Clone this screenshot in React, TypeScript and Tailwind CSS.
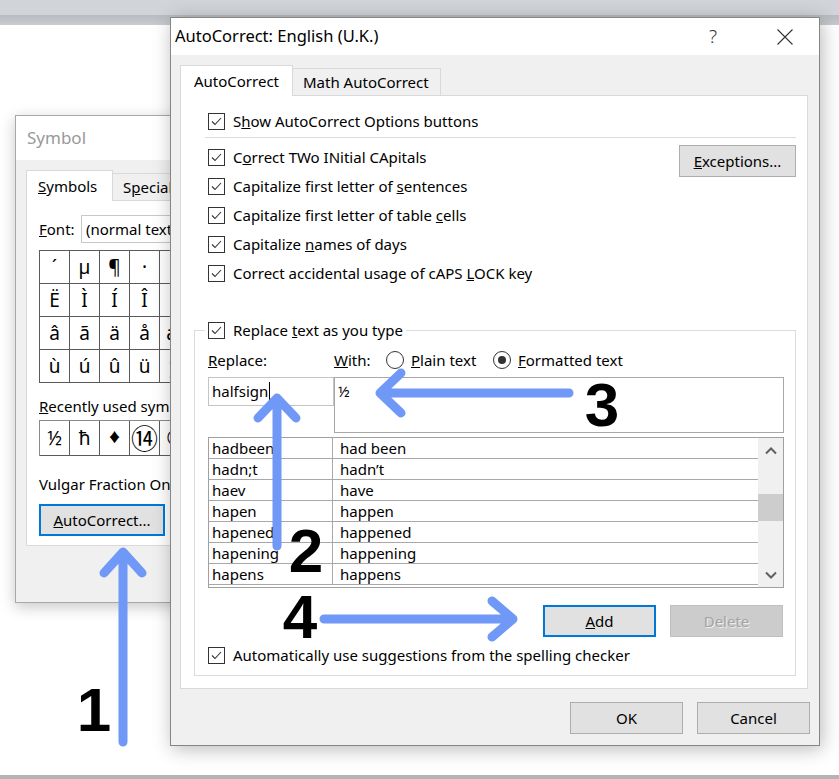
import React from 'react';

const rows: [string, string][] = [
  ['hadbeen', 'had been'],
  ['hadn;t', 'hadn’t'],
  ['haev', 'have'],
  ['hapen', 'happen'],
  ['hapened', 'happened'],
  ['hapening', 'happening'],
  ['hapens', 'happens'],
];

const grid = ['´', 'µ', '¶', '·', '¸', '¹', 'º', '»', 'Ë', 'Ì', 'Í', 'Î', 'Ï', 'Ð', 'Ñ', 'Ò', 'â', 'ã', 'ä', 'å', 'æ', 'ç', 'è', 'é', 'ù', 'ú', 'û', 'ü', 'ý', 'þ', 'ÿ', 'Ā'];
const recent: [string, string][] = [
  ['½', 'text-[19px]'],
  ['ħ', 'text-[19px]'],
  ['♦', 'text-[13px]'],
  ['⑭', 'text-[27px] leading-none'],
  ['©', 'text-[19px]'],
  ['€', 'text-[19px]'],
  ['£', 'text-[19px]'],
  ['¥', 'text-[19px]'],
];

const Check = () => (
  <span className="flex h-[17px] w-[17px] shrink-0 items-center justify-center border border-[#333] bg-white">
    <svg width="13" height="13" viewBox="0 0 13 13">
      <path d="M2 6.5 L5 9.5 L11 3" fill="none" stroke="#333" strokeWidth="1.1" />
    </svg>
  </span>
);

const CheckRow = ({ children }: { children: React.ReactNode }) => (
  <div className="flex h-[29px] items-center gap-[8px]">
    <Check />
    <span>{children}</span>
  </div>
);

const Radio = ({ on }: { on?: boolean }) => (
  <span className="flex h-[18px] w-[18px] shrink-0 items-center justify-center rounded-full border border-[#333] bg-white">
    {on && <span className="h-[8px] w-[8px] rounded-full bg-[#333]" />}
  </span>
);

const Chevron = ({ down }: { down?: boolean }) => (
  <svg width="12" height="8" viewBox="0 0 12 8">
    <path d={down ? 'M1 1.5 L6 6.5 L11 1.5' : 'M1 6.5 L6 1.5 L11 6.5'} fill="none" stroke="#606060" strokeWidth="2" />
  </svg>
);

const SymbolDialog = () => (
  <div className="absolute left-[15px] top-[115px] flex h-[488px] w-[420px] flex-col border border-[#a8a8a8] bg-[#f0f0f0] shadow-[0_4px_14px_rgba(0,0,0,0.22)]">
    <div className="flex h-[44px] items-center bg-white pl-[11px] text-[17px] text-[#999]">Symbol</div>
    <div className="pl-[10px] pt-[10px]">
      <div className="flex h-[30px] items-end">
        <div className="relative z-10 -mb-px flex h-[31px] w-[87px] items-center border border-b-0 border-[#d9d9d9] bg-white pl-[11px]">
          <span><u>S</u>ymbols</span>
        </div>
        <div className="flex h-[27px] w-[170px] items-center border-r border-t border-[#d9d9d9] pl-[10px]">
          S<u>p</u>ecial Characters
        </div>
      </div>
      <div className="h-[346px] border border-[#d9d9d9] bg-white pl-[12px] pt-[14px]">
        <div className="flex h-[28px] items-center">
          <span className="w-[42px]"><u>F</u>ont:</span>
          <div className="flex h-[28px] w-[220px] items-center border border-[#c8c8c8] pl-[4px]">(normal text)</div>
        </div>
        <div className="mt-[7px] grid w-fit grid-cols-[repeat(8,30px)] border-l border-t border-[#5a5a5a]">
          {grid.map((c, i) => (
            <div key={i} className="flex h-[33px] items-center justify-center border-b border-r border-[#5a5a5a] text-[19px]">
              {c}
            </div>
          ))}
        </div>
        <div className="mt-[13px] leading-[20px]"><u>R</u>ecently used symbols:</div>
        <div className="mt-[4px] grid w-fit grid-cols-[repeat(8,30px)] border-l border-t border-[#8a8a8a]">
          {recent.map(([c, size], i) => (
            <div key={i} className={`flex h-[35px] items-center justify-center border-b border-r border-[#5a5a5a] ${size}`}>
              {c}
            </div>
          ))}
        </div>
        <div className="mt-[18px] leading-[20px]">Vulgar Fraction One Half</div>
        <button className="mt-[10px] flex h-[32px] w-[126px] items-center justify-center border-2 border-[#0078d7] bg-[#e1e1e1]">
          <span><u>A</u>utoCorrect...</span>
        </button>
      </div>
    </div>
  </div>
);

const AutoCorrectDialog = () => (
  <div className="absolute left-[170px] top-[17px] flex h-[729px] w-[650px] flex-col border border-[#858585] bg-[#f0f0f0] shadow-[2px_3px_18px_rgba(0,0,0,0.28)]">
    <div className="flex h-[37px] items-center bg-white pl-[4px]">
      <span className="text-[16.5px]">AutoCorrect: English (U.K.)</span>
      <span className="ml-auto mr-[60px] text-[19px] font-light text-[#333]">?</span>
      <svg className="mr-[26px]" width="16" height="16" viewBox="0 0 16 16">
        <path d="M0.5 0.5 L15.5 15.5 M15.5 0.5 L0.5 15.5" stroke="#333" strokeWidth="1.1" />
      </svg>
    </div>
    <div className="flex flex-1 flex-col pl-[9px] pr-[11px] pt-[10px]">
      <div className="flex h-[30px] items-end">
        <div className="relative z-10 -mb-px flex h-[31px] w-[113px] items-center justify-center border border-b-0 border-[#d9d9d9] bg-white">
          AutoCorrect
        </div>
        <div className="flex h-[27px] w-[148px] items-center border-r border-t border-[#d9d9d9] pl-[10px]">
          Math AutoCorrect
        </div>
      </div>
      <div className="flex h-[594px] flex-col border border-[#d9d9d9] bg-white pl-[13px] pr-[11px] pt-[11px]">
        <div className="pl-[14px]">
          <CheckRow>S<u>h</u>ow AutoCorrect Options buttons</CheckRow>
        </div>
        <div className="ml-[11px] mt-px h-px bg-[#dcdcdc]" />
        <div className="mt-[5px] flex pl-[14px]">
          <div className="flex-1">
            <CheckRow>C<u>o</u>rrect TWo INitial CApitals</CheckRow>
            <CheckRow>Capitalize first letter of <u>s</u>entences</CheckRow>
            <CheckRow>Capitalize first letter of table <u>c</u>ells</CheckRow>
            <CheckRow>Capitalize <u>n</u>ames of days</CheckRow>
            <CheckRow>Correct accidental usage of cAPS <u>L</u>OCK key</CheckRow>
          </div>
          <button className="mt-[2px] flex h-[32px] w-[117px] items-center justify-center border border-[#adadad] bg-[#e1e1e1]">
            <span><u>E</u>xceptions...</span>
          </button>
        </div>
        <div className="mt-[42px] flex h-[346px] flex-col border border-[#dcdcdc] pl-[13px] pr-[11px]">
          <div className="-ml-[3px] -mt-[11px] flex h-[20px] w-fit items-center gap-[8px] bg-white pl-[3px] pr-[3px]">
            <Check />
            <span>Replace <u>t</u>ext as you type</span>
          </div>
          <div className="mt-[8px] flex h-[24px] items-center">
            <span className="w-[126px]"><u>R</u>eplace:</span>
            <span className="w-[52px]"><u>W</u>ith:</span>
            <span className="flex w-[107px] items-center gap-[7px]">
              <Radio />
              <span><u>P</u>lain text</span>
            </span>
            <span className="flex items-center gap-[7px]">
              <Radio on />
              <span><u>F</u>ormatted text</span>
            </span>
          </div>
          <div className="mt-[5px] flex items-start">
            <div className="flex h-[29px] w-[126px] items-center border border-[#c4c4c4] pl-[3px]">
              halfsign<span className="ml-px h-[19px] w-px bg-black" />
            </div>
            <div className="h-[56px] flex-1 border border-[#a8a8a8] pl-[3px] pt-[2px]">½</div>
          </div>
          <div className="mt-[4px] flex h-[151px] border border-[#a0a0a0]">
            <div className="flex-1">
              {rows.map(([a, b]) => (
                <div key={a} className="flex h-[21px] border-b border-[#a8a8a8] leading-[20px]">
                  <span className="w-[124px] border-r border-[#a8a8a8] pl-[3px]">{a}</span>
                  <span className="pl-[7px]">{b}</span>
                </div>
              ))}
            </div>
            <div className="flex w-[25px] flex-col items-center bg-[#f0f0f0]">
              <div className="flex h-[25px] items-center"><Chevron /></div>
              <div className="mt-[31px] h-[27px] w-full bg-[#cdcdcd]" />
              <div className="flex-1" />
              <div className="flex h-[25px] items-center"><Chevron down /></div>
            </div>
          </div>
          <div className="mt-[17px] flex justify-end gap-[14px] pr-px">
            <button className="flex h-[32px] w-[113px] items-center justify-center border-2 border-[#0078d7] bg-[#e1e1e1]">
              <span><u>A</u>dd</span>
            </button>
            <button className="flex h-[32px] w-[113px] items-center justify-center border border-[#bfbfbf] bg-[#cccccc] text-[#a3a3a3] [text-shadow:1px_1px_0_#eeeeee]">
              Delete
            </button>
          </div>
          <div className="mt-[4px]">
            <CheckRow>Automatically use su<u>g</u>gestions from the spelling checker</CheckRow>
          </div>
        </div>
      </div>
      <div className="mt-[13px] flex justify-end gap-[14px]">
        <button className="flex h-[32px] w-[113px] items-center justify-center border border-[#adadad] bg-[#e1e1e1]">OK</button>
        <button className="mr-[-2px] flex h-[32px] w-[113px] items-center justify-center border border-[#adadad] bg-[#e1e1e1]">Cancel</button>
      </div>
    </div>
  </div>
);

const Arrows = () => (
  <svg className="pointer-events-none absolute left-0 top-0" width="839" height="779" viewBox="0 0 839 779">
    <g fill="none" stroke="#7098f6" strokeWidth="9" strokeLinecap="round" strokeLinejoin="round">
      <path d="M123 742 V553 M104 573 L123 552 L142 573" />
      <path d="M277 546 V399 M258 418 L277 398 L296 418" />
      <path d="M569 393 H381 M401 373 L380 393 L401 413" />
      <path d="M324 619 H512 M492 601 L513 619 L492 637" />
    </g>
  </svg>
);

const Num = ({ n, className }: { n: string; className: string }) => (
  <div className={`absolute w-[60px] text-center font-['Liberation_Sans',sans-serif] text-[62px] font-bold leading-none text-black ${className}`}>
    {n}
  </div>
);

export default function App() {
  return (
    <div className="relative flex h-[779px] w-[839px] flex-col overflow-hidden bg-white font-['Noto_Sans','Noto_Sans_CJK_SC',sans-serif] text-[15px] text-black">
      <div className="h-[15px] bg-[#d1d4d8]" />
      <div className="h-[10px] bg-gradient-to-b from-[#b8bbbf] to-[#c8cbcf]" />
      <div className="flex-1" />
      <div className="h-[4px] bg-[#b4b4b4]" />
      <SymbolDialog />
      <AutoCorrectDialog />
      <Arrows />
      <Num n="1" className="left-[64px] top-[679px]" />
      <Num n="2" className="left-[276px] top-[520px]" />
      <Num n="3" className="left-[572px] top-[374px]" />
      <Num n="4" className="left-[270px] top-[586px]" />
    </div>
  );
}
